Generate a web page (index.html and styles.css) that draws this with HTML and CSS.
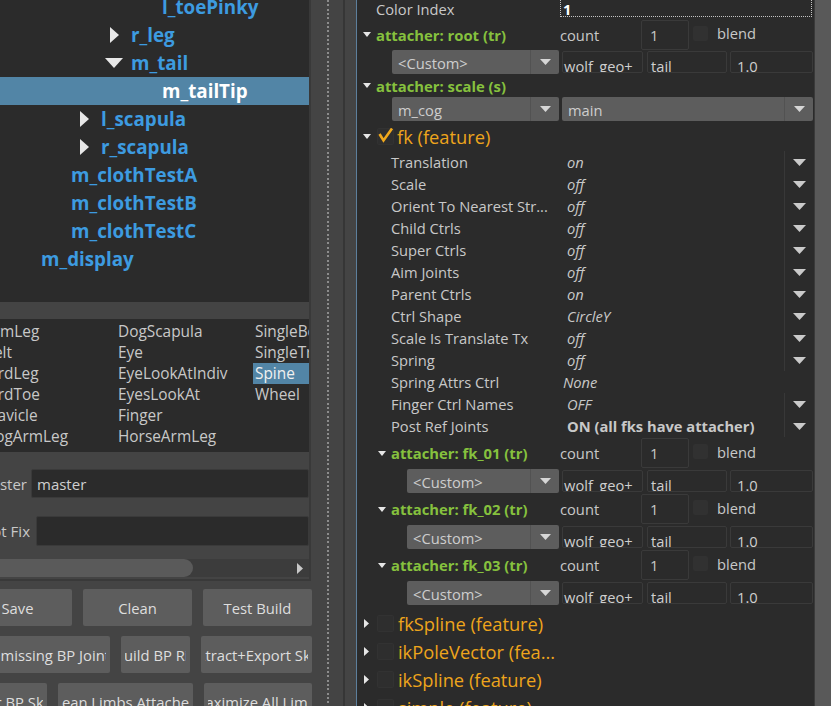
FILE: index.html
```html
<!DOCTYPE html>
<html>
<head>
<meta charset="utf-8">
<link rel="stylesheet" href="styles.css">
</head>
<body>
<div class="app">
  <div class="left">
    <div class="upper">
      <div class="tree">
        <div class="tree-inner">
          <div class="trow d4">l_toePinky</div>
          <div class="trow d3"><svg class="tr-r" width="9" height="16" viewBox="0 0 9 16"><path d="M0 0L9 8L0 16Z"/></svg>r_leg</div>
          <div class="trow d3"><svg class="tr-d" width="18" height="10" viewBox="0 0 18 10"><path d="M0 0H18L9 10Z"/></svg>m_tail</div>
          <div class="trow d4 sel">m_tailTip</div>
          <div class="trow d2"><svg class="tr-r" width="9" height="16" viewBox="0 0 9 16"><path d="M0 0L9 8L0 16Z"/></svg>l_scapula</div>
          <div class="trow d2"><svg class="tr-r" width="9" height="16" viewBox="0 0 9 16"><path d="M0 0L9 8L0 16Z"/></svg>r_scapula</div>
          <div class="trow d1">m_clothTestA</div>
          <div class="trow d1">m_clothTestB</div>
          <div class="trow d1">m_clothTestC</div>
          <div class="trow d0">m_display</div>
        </div>
      </div>
      <div class="list">
        <div class="lgrid">
          <div class="li">ArmLeg</div>
          <div class="li">Belt</div>
          <div class="li">BirdLeg</div>
          <div class="li">BirdToe</div>
          <div class="li">Clavicle</div>
          <div class="li">DogArmLeg</div>
          <div class="li">DogScapula</div>
          <div class="li">Eye</div>
          <div class="li">EyeLookAtIndiv</div>
          <div class="li">EyesLookAt</div>
          <div class="li">Finger</div>
          <div class="li">HorseArmLeg</div>
          <div class="li">SingleBone</div>
          <div class="li">SingleTransform</div>
          <div class="li sel">Spine</div>
          <div class="li">Wheel</div>
        </div>
      </div>
      <div class="group">
        <div class="frow">
          <div class="flabel w27"><span>Master</span></div>
          <div class="finput m4">master</div>
        </div>
        <div class="frow r2">
          <div class="flabel w30"><span>Root Fix</span></div>
          <div class="finput m6"></div>
        </div>
        <div class="hscroll">
          <div class="thumb"></div>
          <div class="track"></div>
          <svg class="harrow" width="6" height="11" viewBox="0 0 6 11"><path d="M0 0L6 5.5L0 11Z"/></svg>
        </div>
      </div>
    </div>
    <div class="buttons">
      <div class="brow">
        <div class="btn w109"><span class="bt">Save</span></div>
        <div class="btn w109"><span class="bt">Clean</span></div>
        <div class="btn w109"><span class="bt">Test Build</span></div>
      </div>
      <div class="brow">
        <div class="btn w162"><span class="bt">Remove missing BP Joints</span></div>
        <div class="btn w69"><span class="bt">Build BP Rig</span></div>
        <div class="btn w111"><span class="bt">Extract+Export Skin</span></div>
      </div>
      <div class="brow">
        <div class="btn w80"><span class="bt">Mirror BP Skin</span></div>
        <div class="btn w135"><span class="bt">Clean Limbs Attachers</span></div>
        <div class="btn w108"><span class="bt">Maximize All Limbs</span></div>
      </div>
    </div>
  </div>

  <div class="split">
    <div class="grip"></div>
    <div class="sline"></div>
    <div class="sgap"></div>
  </div>

  <div class="right">
    <div class="ci">
      <div class="lab">Color Index</div>
      <div class="fld">1</div>
    </div>

    <div class="hdr h31">
      <div class="hl"><svg class="tri" width="8" height="5" viewBox="0 0 8 5"><path d="M0 0H8L4 5Z"/></svg><span class="glabel">attacher: root (tr)</span></div>
      <div class="cnt">count</div>
      <div class="numbox">1</div>
      <div class="cb"></div>
      <div class="blend">blend</div>
    </div>
    <div class="ddrow">
      <div class="dd w167"><div class="ddt">&lt;Custom&gt;</div><div class="dda"><svg width="11" height="6" viewBox="0 0 11 6"><path d="M0 0H11L5.5 6Z"/></svg></div></div>
      <div class="tin t1">wolf_geo+</div>
      <div class="tin t2">tail</div>
      <div class="tin t3">1.0</div>
    </div>

    <div class="hdr h23">
      <div class="hl"><svg class="tri" width="8" height="5" viewBox="0 0 8 5"><path d="M0 0H8L4 5Z"/></svg><span class="glabel">attacher: scale (s)</span></div>
    </div>
    <div class="ddrow">
      <div class="dd w167"><div class="ddt">m_cog</div><div class="dda"><svg width="11" height="6" viewBox="0 0 11 6"><path d="M0 0H11L5.5 6Z"/></svg></div></div>
      <div class="dd wide"><div class="ddt">main</div><div class="dda"><svg width="11" height="6" viewBox="0 0 11 6"><path d="M0 0H11L5.5 6Z"/></svg></div></div>
    </div>

    <div class="fhdr">
      <svg class="tri" width="8" height="5" viewBox="0 0 8 5"><path d="M0 0H8L4 5Z"/></svg>
      <div class="fcb"><svg width="17" height="17" viewBox="0 0 17 17"><polyline points="2.5,6 6.5,12.5 15,0.5" fill="none" stroke="#f0a81c" stroke-width="2.6"/></svg></div>
      <span class="ftext">fk (feature)</span>
    </div>

    <div class="attr"><div class="an">Translation</div><div class="av">on</div><div class="aa"><svg width="13" height="7" viewBox="0 0 13 7"><path d="M0 0H13L6.5 7Z"/></svg></div></div>
    <div class="attr"><div class="an">Scale</div><div class="av">off</div><div class="aa"><svg width="13" height="7" viewBox="0 0 13 7"><path d="M0 0H13L6.5 7Z"/></svg></div></div>
    <div class="attr"><div class="an">Orient To Nearest Str...</div><div class="av">off</div><div class="aa"><svg width="13" height="7" viewBox="0 0 13 7"><path d="M0 0H13L6.5 7Z"/></svg></div></div>
    <div class="attr"><div class="an">Child Ctrls</div><div class="av">off</div><div class="aa"><svg width="13" height="7" viewBox="0 0 13 7"><path d="M0 0H13L6.5 7Z"/></svg></div></div>
    <div class="attr"><div class="an">Super Ctrls</div><div class="av">off</div><div class="aa"><svg width="13" height="7" viewBox="0 0 13 7"><path d="M0 0H13L6.5 7Z"/></svg></div></div>
    <div class="attr"><div class="an">Aim Joints</div><div class="av">off</div><div class="aa"><svg width="13" height="7" viewBox="0 0 13 7"><path d="M0 0H13L6.5 7Z"/></svg></div></div>
    <div class="attr"><div class="an">Parent Ctrls</div><div class="av">on</div><div class="aa"><svg width="13" height="7" viewBox="0 0 13 7"><path d="M0 0H13L6.5 7Z"/></svg></div></div>
    <div class="attr"><div class="an">Ctrl Shape</div><div class="av">CircleY</div><div class="aa"><svg width="13" height="7" viewBox="0 0 13 7"><path d="M0 0H13L6.5 7Z"/></svg></div></div>
    <div class="attr"><div class="an">Scale Is Translate Tx</div><div class="av">off</div><div class="aa"><svg width="13" height="7" viewBox="0 0 13 7"><path d="M0 0H13L6.5 7Z"/></svg></div></div>
    <div class="attr"><div class="an">Spring</div><div class="av">off</div><div class="aa"><svg width="13" height="7" viewBox="0 0 13 7"><path d="M0 0H13L6.5 7Z"/></svg></div></div>
    <div class="attr"><div class="an">Spring Attrs Ctrl</div><div class="av shift">None</div></div>
    <div class="attr"><div class="an">Finger Ctrl Names</div><div class="av">OFF</div><div class="aa"><svg width="13" height="7" viewBox="0 0 13 7"><path d="M0 0H13L6.5 7Z"/></svg></div></div>
    <div class="attr"><div class="an">Post Ref Joints</div><div class="av strong">ON (all fks have attacher)</div><div class="aa"><svg width="13" height="7" viewBox="0 0 13 7"><path d="M0 0H13L6.5 7Z"/></svg></div></div>

    <div class="hdr h32">
      <div class="hl nested"><svg class="tri" width="8" height="5" viewBox="0 0 8 5"><path d="M0 0H8L4 5Z"/></svg><span class="glabel">attacher: fk_01 (tr)</span></div>
      <div class="cnt">count</div>
      <div class="numbox">1</div>
      <div class="cb"></div>
      <div class="blend">blend</div>
    </div>
    <div class="ddrow nested">
      <div class="dd w152"><div class="ddt">&lt;Custom&gt;</div><div class="dda"><svg width="11" height="6" viewBox="0 0 11 6"><path d="M0 0H11L5.5 6Z"/></svg></div></div>
      <div class="tin t1">wolf_geo+</div>
      <div class="tin t2">tail</div>
      <div class="tin t3">1.0</div>
    </div>

    <div class="hdr h32">
      <div class="hl nested"><svg class="tri" width="8" height="5" viewBox="0 0 8 5"><path d="M0 0H8L4 5Z"/></svg><span class="glabel">attacher: fk_02 (tr)</span></div>
      <div class="cnt">count</div>
      <div class="numbox">1</div>
      <div class="cb"></div>
      <div class="blend">blend</div>
    </div>
    <div class="ddrow nested">
      <div class="dd w152"><div class="ddt">&lt;Custom&gt;</div><div class="dda"><svg width="11" height="6" viewBox="0 0 11 6"><path d="M0 0H11L5.5 6Z"/></svg></div></div>
      <div class="tin t1">wolf_geo+</div>
      <div class="tin t2">tail</div>
      <div class="tin t3">1.0</div>
    </div>

    <div class="hdr h32">
      <div class="hl nested"><svg class="tri" width="8" height="5" viewBox="0 0 8 5"><path d="M0 0H8L4 5Z"/></svg><span class="glabel">attacher: fk_03 (tr)</span></div>
      <div class="cnt">count</div>
      <div class="numbox">1</div>
      <div class="cb"></div>
      <div class="blend">blend</div>
    </div>
    <div class="ddrow nested">
      <div class="dd w152"><div class="ddt">&lt;Custom&gt;</div><div class="dda"><svg width="11" height="6" viewBox="0 0 11 6"><path d="M0 0H11L5.5 6Z"/></svg></div></div>
      <div class="tin t1">wolf_geo+</div>
      <div class="tin t2">tail</div>
      <div class="tin t3">1.0</div>
    </div>

    <div class="feats">
      <div class="feat"><svg class="ftri" width="5" height="9" viewBox="0 0 5 9"><path d="M0 0L5 4.5L0 9Z"/></svg><div class="fcb"></div><span class="ftext">fkSpline (feature)</span></div>
      <div class="feat"><svg class="ftri" width="5" height="9" viewBox="0 0 5 9"><path d="M0 0L5 4.5L0 9Z"/></svg><div class="fcb"></div><span class="ftext">ikPoleVector (fea...</span></div>
      <div class="feat"><svg class="ftri" width="5" height="9" viewBox="0 0 5 9"><path d="M0 0L5 4.5L0 9Z"/></svg><div class="fcb"></div><span class="ftext">ikSpline (feature)</span></div>
      <div class="feat"><svg class="ftri" width="5" height="9" viewBox="0 0 5 9"><path d="M0 0L5 4.5L0 9Z"/></svg><div class="fcb"></div><span class="ftext">simple (feature)</span></div>
    </div>
  </div>

  <div class="rscroll"></div>
</div>
</body>
</html>
```

FILE: styles.css
```css
html, body {
  margin: 0;
  padding: 0;
}
body {
  width: 831px;
  height: 706px;
  overflow: hidden;
  background: #444444;
  font-family: "Open Sans", "Noto Sans", sans-serif;
  font-size: 14.7px;
  color: #c8c8c8;
}
.app {
  display: flex;
  height: 706px;
}

/* ---------- left column ---------- */
.left {
  width: 312px;
  flex: none;
  display: flex;
  flex-direction: column;
  overflow: hidden;
}
.upper {
  width: 309px;
  border-right: 2px solid #393939;
  border-bottom: 2px solid #393939;
  padding-bottom: 2px;
}
.tree {
  height: 302px;
  background: #2b2b2b;
  overflow: hidden;
}
.tree-inner {
  margin-top: -7px;
}
.trow {
  height: 28px;
  display: flex;
  align-items: center;
  font-weight: 700;
  font-size: 18.8px;
  color: #3d9be0;
  white-space: nowrap;
}
.trow svg path { fill: #e8e8e8; }
.trow.sel {
  background: #5285a6;
  color: #ffffff;
}
.d0 { padding-left: 41px; }
.d1 { padding-left: 71px; }
.d2 { padding-left: 101px; }
.d3 { padding-left: 131px; }
.d4 { padding-left: 162px; }
.tr-r { margin-left: -21px; margin-right: 12px; flex: none; }
.tr-d { margin-left: -26px; margin-right: 8px; flex: none; }

.list {
  margin-top: 17px;
  height: 133px;
  box-sizing: border-box;
  padding-top: 2px;
  background: #2b2b2b;
  overflow: hidden;
}
.lgrid {
  display: grid;
  grid-template-columns: 134px 137px 137px;
  grid-template-rows: repeat(6, 21px);
  grid-auto-flow: column;
  margin-left: -18px;
  font-size: 15.4px;
}
.li {
  line-height: 21px;
  padding-left: 2px;
  white-space: nowrap;
  overflow: hidden;
}
.li.sel {
  background: #5285a6;
  color: #f0f0f0;
}

.group {
  padding-top: 17px;
}
.frow {
  display: flex;
  align-items: center;
  height: 29px;
}
.frow.r2 {
  margin-top: 18px;
  height: 30px;
}
.flabel {
  display: flex;
  justify-content: flex-end;
  overflow: hidden;
  white-space: nowrap;
  flex: none;
  font-size: 15px;
}
.w27 { width: 27px; }
.w30 { width: 30px; }
.finput {
  flex: 1;
  height: 100%;
  box-sizing: border-box;
  background: #2b2b2b;
  border: 1px solid #3a3a3a;
  border-radius: 2px;
  padding-left: 5px;
  display: flex;
  align-items: center;
  color: #cfcfcf;
  font-size: 15px;
}
.m4 { margin-left: 4px; }
.m6 { margin-left: 6px; }
.hscroll {
  margin-top: 13px;
  height: 18px;
  display: flex;
  align-items: center;
  background: #3c3c3c;
}
.thumb {
  width: 193px;
  height: 100%;
  background: #5a5a5a;
  border-radius: 0 9px 9px 0;
  flex: none;
}
.track { flex: 1; }
.harrow { margin-right: 6px; flex: none; }
.harrow path { fill: #c8c8c8; }

.buttons {
  margin-top: 8px;
  display: flex;
  flex-direction: column;
  gap: 10px;
}
.brow {
  width: 312px;
  height: 37px;
  display: flex;
  justify-content: flex-end;
  gap: 11px;
}
.btn {
  flex: none;
  height: 37px;
  box-sizing: border-box;
  padding: 0 4px;
  background: #5d5d5d;
  color: #dedede;
  border-radius: 2px;
  display: flex;
  font-size: 14.8px;
}
.bt {
  flex: 1;
  display: flex;
  justify-content: center;
  align-items: center;
  overflow: hidden;
  white-space: nowrap;
}
.w109 { width: 109px; }
.w162 { width: 162px; }
.w69 { width: 69px; }
.w111 { width: 111px; }
.w80 { width: 80px; }
.w135 { width: 135px; }
.w108 { width: 108px; }

/* ---------- splitter ---------- */
.split {
  width: 45px;
  flex: none;
  display: flex;
}
.grip {
  width: 31px;
  background-color: #444444;
  background-image: repeating-linear-gradient(to bottom, #8c8c8c 0 2px, transparent 2px 4.33px);
  background-size: 2px 100%;
  background-position: 15px 0;
  background-repeat: no-repeat;
}
.sline {
  width: 2px;
  background: #363636;
}
.sgap {
  width: 11px;
  background: #444444;
  border-right: 1px solid #5d7f9c;
}

/* ---------- right panel ---------- */
.right {
  width: 457px;
  flex: none;
  background: #2b2b2b;
  overflow: hidden;
}
.rscroll {
  width: 17px;
  flex: none;
  background: #595959;
  border-left: 1px solid #3a3a3a;
  box-sizing: border-box;
}
.ci {
  height: 19px;
  display: flex;
}
.ci .lab {
  width: 203px;
  flex: none;
  box-sizing: border-box;
  padding-left: 19px;
  line-height: 18px;
}
.ci .fld {
  margin-top: -5px;
  height: 22px;
  width: 252px;
  box-sizing: border-box;
  border: 1px dotted #c4c4c4;
  color: #ffffff;
  font-weight: 700;
  padding: 4px 0 0 2px;
  line-height: 18px;
}
.hdr {
  display: flex;
  align-items: center;
}
.h31 { height: 31px; }
.h32 { height: 32px; }
.h23 { height: 23px; }
.hl {
  width: 203px;
  flex: none;
  box-sizing: border-box;
  padding-left: 6px;
  display: flex;
  align-items: center;
  white-space: nowrap;
}
.hl.nested { padding-left: 21px; }
.tri { margin-right: 5px; flex: none; }
.tri path { fill: #e6e6e6; }
.glabel {
  color: #86c13e;
  font-weight: 700;
  font-size: 14.8px;
}
.cnt {
  width: 81px;
  flex: none;
}
.numbox {
  width: 48px;
  height: 30px;
  flex: none;
  box-sizing: border-box;
  border: 1px solid #3a3a3a;
  border-radius: 2px;
  padding-left: 8px;
  line-height: 28px;
}
.cb {
  width: 15px;
  height: 15px;
  margin-left: 4px;
  margin-top: -3px;
  background: #313131;
  border-radius: 2px;
  flex: none;
}
.blend {
  margin-left: 9px;
  margin-top: -3px;
}
.ddrow {
  display: flex;
  height: 24px;
  padding-left: 35px;
}
.ddrow.nested { padding-left: 50px; }
.dd {
  height: 24px;
  background: #5d5d5d;
  border-radius: 2px;
  display: flex;
  flex: none;
  color: #cdcdcd;
}
.w167 { width: 167px; }
.w152 { width: 152px; }
.dd.wide {
  width: 251px;
  margin-left: 3px;
}
.ddt {
  flex: 1;
  padding-left: 6px;
  line-height: 26px;
  overflow: hidden;
  white-space: nowrap;
  border-right: 1px solid #525252;
}
.dda {
  width: 28px;
  flex: none;
  display: flex;
  align-items: center;
  justify-content: center;
}
.dda path { fill: #d6d6d6; }
.tin {
  height: 22px;
  margin-top: 1px;
  box-sizing: border-box;
  border: 1px solid #3a3a3a;
  border-radius: 2px;
  overflow: hidden;
  white-space: nowrap;
  line-height: 18px;
  padding-top: 5px;
  flex: none;
  color: #cfcfcf;
}
.t1 { width: 81px; margin-left: 3px; padding-left: 1px; }
.t2 { width: 80px; margin-left: 4px; padding-left: 3px; }
.t3 { width: 83px; margin-left: 3px; padding-left: 6px; }

.fhdr {
  height: 30px;
  display: flex;
  align-items: center;
  padding-left: 6px;
}
.fhdr .tri { margin-right: 6px; }
.fcb {
  width: 17px;
  height: 17px;
  flex: none;
  border-radius: 2px;
  background: #2e2e2e;
  box-shadow: inset 0 0 0 1px #323232;
}
.fhdr .fcb svg { display: block; }
.ftext {
  color: #eea51c;
  font-size: 18.3px;
  margin-left: 3px;
  white-space: nowrap;
}
.attr {
  height: 22px;
  display: flex;
  align-items: center;
}
.an {
  width: 210px;
  flex: none;
  box-sizing: border-box;
  padding-left: 34px;
  white-space: nowrap;
}
.av {
  flex: 1;
  font-style: italic;
  white-space: nowrap;
}
.av.shift { margin-left: -4px; }
.av.strong {
  font-style: normal;
  font-weight: 700;
}
.aa {
  width: 30px;
  height: 22px;
  flex: none;
  box-sizing: border-box;
  border-left: 1px solid #383838;
  display: flex;
  align-items: center;
  justify-content: center;
}
.aa path { fill: #cacaca; }
.feats {
  margin-top: 4px;
}
.feat {
  height: 28px;
  display: flex;
  align-items: center;
  padding-left: 7px;
}
.ftri { margin-right: 8px; flex: none; }
.ftri path { fill: #e6e6e6; }
.feat .ftext { margin-left: 4px; }
```
